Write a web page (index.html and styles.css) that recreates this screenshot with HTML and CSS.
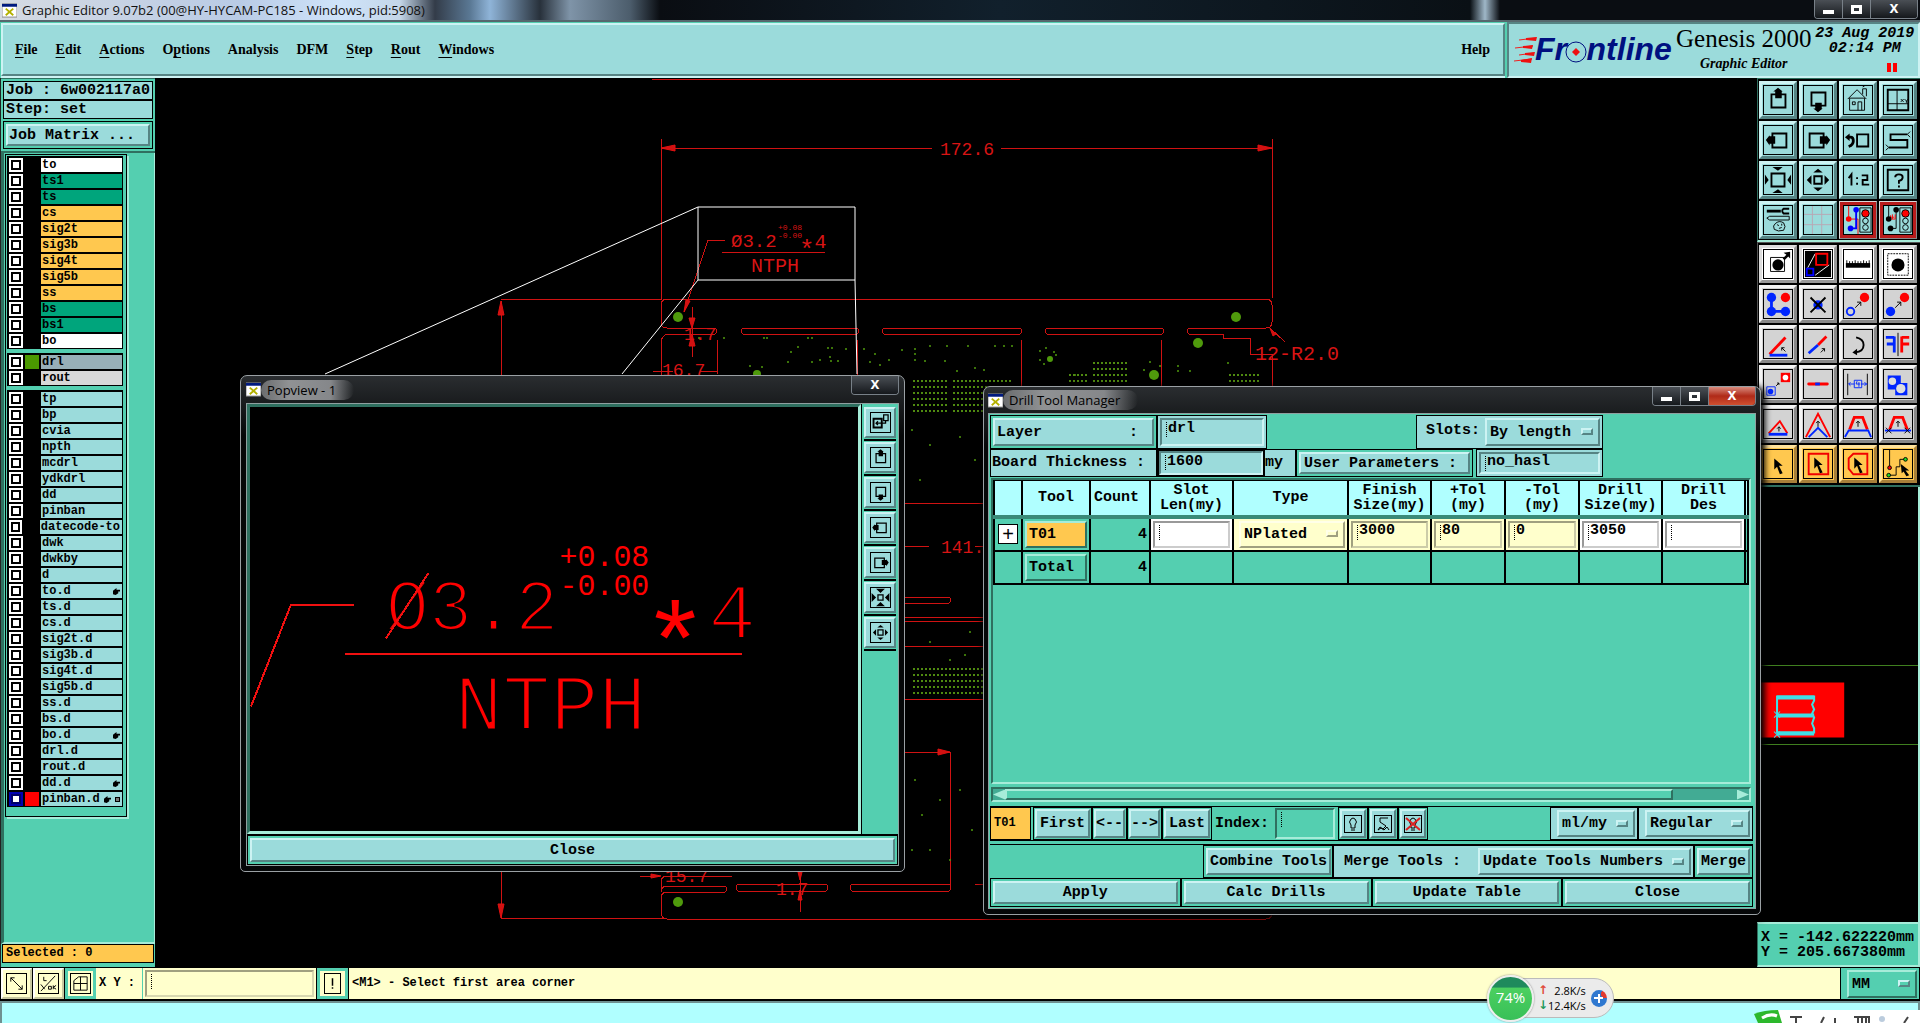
FILE: index.html
```html
<!DOCTYPE html>
<html lang="en">
<head>
    <meta charset="UTF-8">
    <title>Graphic Editor 9.07b2</title>
    <link rel="stylesheet" href="styles.css">
</head>
<body>
<svg class="defs" aria-hidden="true">
    <symbol id="i-up" viewBox="0 0 30 30"><path d="M8 9h15v14H8z" fill="none" stroke="#000" stroke-width="2"/><path d="M15 2l5 4h-1v7h-7V6h-2z"/></symbol>
    <symbol id="i-down" viewBox="0 0 30 30"><path d="M8 7h15v14H8z" fill="none" stroke="#000" stroke-width="2"/><path d="M15 28l5-4h-1v-6h-7v6h-2z"/></symbol>
    <symbol id="i-left" viewBox="0 0 30 30"><path d="M9 8h15v15H9z" fill="none" stroke="#000" stroke-width="2"/><path d="M2 15l4-5v1h6v8H6v2z"/></symbol>
    <symbol id="i-right" viewBox="0 0 30 30"><path d="M6 8h15v15H6z" fill="none" stroke="#000" stroke-width="2"/><path d="M28 15l-4-5v1h-7v8h7v2z"/></symbol>
    <symbol id="i-home" viewBox="0 0 30 30"><path d="M4 14L14 4l10 10M6 13v13h16V13M20 9V3h4v8M20 1l2-1M15 26v-9h4v9M9 17h3v3H9zM6 13h16" fill="none" stroke="#000"/></symbol>
    <symbol id="i-xy" viewBox="0 0 30 30"><path d="M4 4h22v22H4z" fill="none" stroke="#000" stroke-width="2"/><path d="M14 4v22M4 19h22M18 14l3 3M21 14l-3 3M22 14l2 2 2-2M24 16v2" fill="none" stroke="#000"/></symbol>
    <symbol id="i-back" viewBox="0 0 30 30"><path d="M14 9h12v13H14z" fill="none" stroke="#000" stroke-width="2"/><path d="M4 12h3q3 0 3 4t-5 6" fill="none" stroke="#000" stroke-width="3"/><path d="M1 12l5-4v8z"/></symbol>
    <symbol id="i-snake" viewBox="0 0 30 30"><path d="M25 9H7v6h18v8H5" fill="none" stroke="#000" stroke-width="2"/><path d="M28 6l-3 3 3 3M2 20l3 3-3 3" fill="none" stroke="#000"/></symbol>
    <symbol id="i-in" viewBox="0 0 30 30"><path d="M8 8h14v14H8z" fill="none" stroke="#000" stroke-width="2"/><path d="M9 1h11l-5 4zM9 29h11l-5-4zM1 9v11l4-5zM29 9v11l-4-5z"/></symbol>
    <symbol id="i-out" viewBox="0 0 30 30"><path d="M11 11h8v8h-8z" fill="none" stroke="#000" stroke-width="2"/><path d="M10 7h10l-5-4zM10 23h10l-5 4zM8 10v10l-5-5zM22 10v10l5-5z"/></symbol>
    <symbol id="i-in2" viewBox="0 0 30 30"><path d="M11 11h8v8h-8z" fill="none" stroke="#000" stroke-width="2"/><path d="M8 1h14l-7 7zM8 29h14l-7-7zM1 8v14l7-7zM29 8v14l-7-7z"/></symbol>
    <symbol id="i-ratio" viewBox="0 0 30 30"><path d="M5 13l3-4v12M14 12v2M14 18v2M19 10h6v5h-5v5h7" fill="none" stroke="#000" stroke-width="2"/></symbol>
    <symbol id="i-help" viewBox="0 0 30 30"><path d="M4 4h22v22H4z" fill="none" stroke="#000" stroke-width="2"/><path d="M12 12q0-3 4-3t4 3-4 4v3M16 21v2" fill="none" stroke="#000" stroke-width="2"/></symbol>
    <symbol id="i-tools" viewBox="0 0 30 30"><path d="M3 13l3-2h21v4H6z" stroke="#000" fill="none"/><path d="M3 4h15v3H3z"/><path d="M27 3h-6q-3 2 0 5h6" fill="none" stroke="#000" stroke-width="2"/><path d="M12 19q4-4 9-1 3 4 0 8-6 2-10-1-2-4 1-6zM14 20l2 1M19 19v2M16 24l3-1" fill="none" stroke="#000"/></symbol>
    <symbol id="i-grid" viewBox="0 0 30 30"><path d="M9 0v30M19 0v30M0 9h30M0 20h30" stroke="#b9a7b4" fill="none"/></symbol>
    <symbol id="i-net1" viewBox="0 0 30 30"><path d="M5 0v14h10v16" fill="none" stroke="red"/><path d="M13 5v19H8" fill="none" stroke="#00f" stroke-width="2"/><circle cx="5" cy="14" r="3" fill="red"/><circle cx="13" cy="4" r="3" fill="#00f"/><circle cx="7" cy="24" r="3" fill="#00f"/><path d="M17 2h12v26H17z" fill="none" stroke="#000"/><circle cx="23" cy="8" r="4" fill="red" stroke="#000"/><circle cx="23" cy="16" r="3" fill="none" stroke="#000"/><circle cx="23" cy="23" r="3" fill="none" stroke="#000"/></symbol>
    <symbol id="i-net2" viewBox="0 0 30 30"><path d="M5 0v14M13 5v19H8" fill="none" stroke="#000"/><path d="M7 10v4h5V9M9 9v5M7 12h4" fill="none" stroke="red"/><circle cx="5" cy="14" r="3"/><circle cx="13" cy="4" r="3"/><circle cx="7" cy="24" r="3"/><path d="M17 2h12v26H17z" fill="none" stroke="#000"/><circle cx="23" cy="8" r="4" fill="red" stroke="#000"/><circle cx="23" cy="16" r="3" fill="none" stroke="#000"/><circle cx="23" cy="23" r="3" fill="none" stroke="#000"/></symbol>
    <symbol id="i-feat" viewBox="0 0 30 30"><path d="M7 8h15v15H7z" fill="none" stroke="#000"/><circle cx="15" cy="16" r="6"/><path d="M20 9l4-4-3-2 7-1v7l-2-2-4 4z"/></symbol>
    <symbol id="i-pop" viewBox="0 0 30 30"><path d="M1 1h28v28H1z"/><path d="M12 4L4 19M27 16L12 27" stroke="#fff"/><path d="M13 4h12v12H13z" fill="none" stroke="red" stroke-width="2"/><path d="M3 20h7v7H3z" fill="none" stroke="#00f" stroke-width="2"/></symbol>
    <symbol id="i-ruler" viewBox="0 0 30 30"><path d="M2 14h26v5H2z"/><path d="M3 11v4M6 12v4M9 12v4M12 11v4M15 12v4M18 12v4M21 11v4M24 12v4M27 11v4" stroke="#000"/></symbol>
    <symbol id="i-pad" viewBox="0 0 30 30"><path d="M4 4h22v23H4z" fill="none" stroke="#000" stroke-dasharray="2 1"/><circle cx="15" cy="16" r="7"/></symbol>
    <symbol id="i-dots" viewBox="0 0 30 30"><path d="M8 8v15h15" fill="none" stroke="#0026ff" stroke-width="3"/><circle cx="8" cy="8" r="5" fill="#0026ff"/><circle cx="8" cy="23" r="5" fill="#0026ff"/><circle cx="23" cy="23" r="5" fill="#0026ff"/><circle cx="23" cy="8" r="5" fill="red"/></symbol>
    <symbol id="i-del" viewBox="0 0 30 30"><circle cx="15" cy="16" r="5" fill="#0026ff"/><path d="M7 8l16 16M23 8L7 24" stroke="#000" stroke-width="2"/></symbol>
    <symbol id="i-copy" viewBox="0 0 30 30"><circle cx="7" cy="23" r="4" fill="none" stroke="#0026ff" stroke-width="2"/><circle cx="22" cy="8" r="5" fill="red"/><path d="M12 19l6-6M14 13h4v4" fill="none" stroke="#000"/></symbol>
    <symbol id="i-move" viewBox="0 0 30 30"><circle cx="7" cy="23" r="5" fill="#0026ff"/><circle cx="22" cy="8" r="5" fill="red"/><path d="M12 19l6-6M14 13h4v4" fill="none" stroke="#000"/></symbol>
    <symbol id="i-rot" viewBox="0 0 30 30"><path d="M6 26L23 8" stroke="red" stroke-width="3"/><path d="M6 27h19" stroke="#0026ff" stroke-width="3"/><path d="M23 23l-4-4M19 22v-3h3" fill="none" stroke="#000"/></symbol>
    <symbol id="i-stretch" viewBox="0 0 30 30"><path d="M15 16l9-9" stroke="red" stroke-width="3"/><path d="M5 25l10-9" stroke="#0026ff" stroke-width="3"/><path d="M18 24l4-4M19 20h3v3" fill="none" stroke="#000"/></symbol>
    <symbol id="i-turn" viewBox="0 0 30 30"><path d="M13 8q8 2 8 8 0 7-9 8" fill="none" stroke="#000" stroke-width="2"/><path d="M9 24l5-4v7z"/></symbol>
    <symbol id="i-mirror" viewBox="0 0 30 30"><path d="M2 8h9M3 15h8M11 7v17" fill="none" stroke="#0026ff" stroke-width="3"/><path d="M27 8h-8M27 15h-7M19 7v17" fill="none" stroke="red" stroke-width="3"/><path d="M15 3v25" stroke="#000"/></symbol>
    <symbol id="i-chg" viewBox="0 0 30 30"><path d="M18 3h10v10H18z" fill="red"/><circle cx="23" cy="8" r="3" fill="#fff"/><path d="M3 18h9v9H3z" fill="none" stroke="#0026ff"/><circle cx="7" cy="23" r="3" fill="#0026ff"/><path d="M13 17l3-3M14 14h2v2" fill="none" stroke="#000"/></symbol>
    <symbol id="i-line" viewBox="0 0 30 30"><path d="M5 15h20" stroke="red" stroke-width="3" stroke-linecap="round"/><path d="M12 15h5" stroke="#0026ff" stroke-width="3"/></symbol>
    <symbol id="i-gap" viewBox="0 0 30 30"><path d="M4 4v23M25 4v23" stroke="#000"/><path d="M5 15h6M18 15h7M5 15l2-2M5 15l2 2M24 15l-2-2M24 15l-2 2M11 11h8v8h-8zM14 12l-1 3h4M16 13v5" fill="none" stroke="#0026ff"/></symbol>
    <symbol id="i-sub" viewBox="0 0 30 30"><path d="M4 6h14v8h7v13H12v-6H4z" fill="#0026ff"/><circle cx="9" cy="12" r="4" fill="#ddd"/><circle cx="18" cy="20" r="5" fill="#ddd"/></symbol>
    <symbol id="i-t1" viewBox="0 0 30 30"><path d="M5 25l12-13 8 13" fill="none" stroke="red" stroke-width="2"/><path d="M5 26h20" stroke="#0026ff" stroke-width="3"/><path d="M16 23v-5M14 20l2-2 2 2" fill="none" stroke="#000"/></symbol>
    <symbol id="i-t2" viewBox="0 0 30 30"><path d="M2 29L15 4l13 25" fill="none" stroke="red" stroke-width="2"/><path d="M5 29l10-10 10 10" fill="none" stroke="#0026ff" stroke-width="2"/><path d="M15 18v-6M13 14l2-2 2 2" fill="none" stroke="#000"/></symbol>
    <symbol id="i-t3" viewBox="0 0 30 30"><path d="M6 21L11 8h9l5 13" fill="none" stroke="red" stroke-width="3"/><path d="M1 29l4-7h21l3 7" fill="none" stroke="#0026ff" stroke-width="2"/><path d="M15 18v-6M13 14l2-2 2 2" fill="none" stroke="#000"/></symbol>
    <symbol id="i-t4" viewBox="0 0 30 30"><path d="M6 21L11 8h9l5 13" fill="none" stroke="red" stroke-width="3"/><path d="M1 22h28" fill="none" stroke="#0026ff" stroke-width="2"/><path d="M15 18v-6M13 14l2-2 2 2M2 19l6 6M8 19l-6 6M22 19l6 6M28 19l-6 6" fill="none" stroke="#000"/></symbol>
    <symbol id="i-arrow" viewBox="0 0 30 30"><path d="M11 9l9 8h-4l4 8-3 1-3-8-3 3z"/></symbol>
    <symbol id="i-asq" viewBox="0 0 30 30"><path d="M5 4h21v22H5z" fill="none" stroke="#f20000" stroke-width="2"/><path d="M11 8l9 8h-4l4 8-3 1-3-8-3 3z"/></symbol>
    <symbol id="i-aoct" viewBox="0 0 30 30"><path d="M10 4h15v22H10l-5-6V9z" fill="none" stroke="#f20000" stroke-width="2"/><path d="M11 8l9 8h-4l4 8-3 1-3-8-3 3z"/></symbol>
    <symbol id="i-anet" viewBox="0 0 30 30"><path d="M6 0v18M6 27h7v-9h4v-8h6" fill="none" stroke="#000"/><circle cx="6" cy="19" r="2" fill="red" stroke="#000"/><circle cx="5" cy="27" r="2" fill="#2d2" stroke="#000"/><circle cx="23" cy="10" r="2" fill="#2d2" stroke="#000"/><path d="M18 15l9 7h-4l4 5-3 1-3-5-2 2z"/></symbol>
    <symbol id="i-popwin" viewBox="0 0 30 30"><path d="M4 9h13v14H4z" fill="none" stroke="#000" stroke-width="3"/><path d="M20 3h7v9h-7zM8 16h15v-4M11 13l-3 3 3 3" fill="none" stroke="#000" stroke-width="2"/></symbol>
    <symbol id="i-x" viewBox="0 0 16 16"><path d="M0 1h16v14H0z" fill="#fff" stroke="#888"/><path d="M0 1h16v3H0z" fill="#001a80"/><path d="M4 6l8 7M12 6l-8 7" stroke="#b3b000" stroke-width="2"/></symbol>
    <symbol id="i-hand" viewBox="0 0 8 8"><path d="M0 3l4-3v2h4v2H6v2l-3 2-3-1z"/></symbol>
    <symbol id="i-diag" viewBox="0 0 20 20"><path d="M4 4l12 12M4 8V4h4M12 16h4v-4" fill="none" stroke="#000"/></symbol>
    <symbol id="i-angle" viewBox="0 0 20 20"><path d="M2 18L17 2M5 3v4h3M2 11l4 5M10 13h3v3h-3zM15 12v4M18 12l-3 2 3 2" fill="none" stroke="#000"/></symbol>
    <symbol id="i-snap" viewBox="0 0 20 20"><path d="M3 7l5-4h9v14H3zM10 3v14M3 10h14" fill="none" stroke="#000"/></symbol>
    <symbol id="i-bang" viewBox="0 0 20 20"><path d="M10 3v10M10 15v2" stroke="#000" stroke-width="2"/></symbol>
    <symbol id="i-bulb" viewBox="0 0 16 16"><path d="M6 12V9Q3 6 6 3q2-2 4 0 3 3 0 6v3zM6 14h4" fill="none" stroke="#000"/></symbol>
    <symbol id="i-hist" viewBox="0 0 16 16"><path d="M13 2H5v4l6 4-3 3-3-2-2 3M3 14l3-2 3 2 3-3 2 3" fill="none" stroke="#000"/></symbol>
    <symbol id="i-nobulb" viewBox="0 0 16 16"><path d="M6 12V9Q3 6 6 3q2-2 4 0 3 3 0 6v3zM6 14h4" fill="none" stroke="#000"/><path d="M1 2l14 12M15 2L1 14" stroke="#d22" stroke-width="2"/></symbol>
</svg>

<div class="app">
    <header class="titlebar">
        <svg class="app-icon"><use href="#i-x"/></svg>
        <h1>Graphic Editor 9.07b2 (00@HY-HYCAM-PC185 - Windows, pid:5908)</h1>
        <div class="win-btns">
            <button type="button" aria-label="Minimize"><i class="min"></i></button>
            <button type="button" aria-label="Restore"><i class="max"></i></button>
            <button type="button" class="wide" aria-label="Close">x</button>
        </div>
    </header>

    <div class="topbar">
        <nav class="menu">
            <a href="#"><u>F</u>ile</a>
            <a href="#"><u>E</u>dit</a>
            <a href="#"><u>A</u>ctions</a>
            <a href="#">O<u>p</u>tions</a>
            <a href="#">Analysis</a>
            <a href="#">DFM</a>
            <a href="#"><u>S</u>tep</a>
            <a href="#"><u>R</u>out</a>
            <a href="#"><u>W</u>indows</a>
            <a href="#" class="help">Help</a>
        </nav>
        <div class="brand">
            <svg class="logo" viewBox="0 0 162 50">
                <path d="M5 16l17-2M1 24l18-2M5 31l15-2M0 37l18-2" stroke="#e22" fill="none"/>
                <path d="M12 14l11-1-1 4-10-1zM9 22l10-1-1 4-9-1zM11 29l10-1-1 4-9-1zM7 36l11-2-1 5-10-1z" fill="#e11"/>
                <text x="21" y="36">Fr<tspan class="ghost">o</tspan>ntline</text>
                <circle cx="62" cy="28" r="10" fill="#9bdbdb" stroke="#001080"/>
                <path d="M62 24l4 4-4 4-4-4z" fill="#e11"/>
            </svg>
            <div class="product"><strong>Genesis 2000</strong><em>Graphic Editor</em></div>
            <div class="clock">23 Aug 2019<br>02:14 PM<i class="pause"></i></div>
        </div>
    </div>

    <main class="workspace">
        <aside class="left">
            <div class="info">
                <div class="cell">Job : 6w002117a0</div>
                <div class="cell">Step: set</div>
                <div class="slot"><button type="button" class="btn">Job Matrix ...</button></div>
            </div>
            <div class="layers"><div class="layer-box" id="layers"></div></div>
            <div class="selected"><div>Selected : 0</div></div>
        </aside>

        <section class="canvas">
            <svg viewBox="155 78 1602 889" preserveAspectRatio="xMinYMin slice">
                <defs>
                    <pattern id="dots" width="4" height="6" patternUnits="userSpaceOnUse"><path d="M1 2h2v2H1z" fill="#4f8a10"/></pattern>
                </defs>
                <g class="wire">
                    <path d="M652 79h368M661 139v161M1272 139v159M661 148h271M1001 148h271M501 299h160M501 301v617M501 918h162"/>
                    <path d="M661 305q0-6 6-6h599q6 0 6 6v17q0 6-6 6M661 305v17q0 6 6 6"/>
                    <path d="M667 328h48q4 3 0 6h-49q-5 4-5 8v500M743 328h114q4 3 0 6H743q-4-3 0-6zM884 328h136q4 3 0 6H884q-4-3 0-6zM1047 328h115q4 3 0 6h-115q-4-3 0-6zM1266 328h-77q-4 3 0 6h34v4h27v16h22v500M717 340v34M1021 340v540M1161 340v540M857 340v40"/>
                    <path d="M692 307v50M653 371h20M700 371h17M1270 328l15 14"/>
                    <path d="M905 503h78M905 617h78M905 621h78M905 597h44q4 3 0 6h-44M905 646h78M905 699h78M905 752h45v135M905 546h24M975 546h8"/>
                    <path d="M661 888v-6q0-6 6-6h65M640 876h20M700 876h30M661 892q0-6 6-6h58q4 3 0 6h-58M738 884h88q4 3 0 7h-88q-4-3 0-7zM852 884h97q4 3 0 7h-97q-4-3 0-7zM975 884h90M661 912v-14q0-6 6-6M661 912q0 7 6 7h599q6 0 6-7M800 872v40"/>
                    <path d="M684 312l24-72h17M722 252h103"/>
                </g>
                <g class="heads">
                    <path d="M661 148l14-3v6zM1272 148l-14-3v6zM501 301l-3 14h6zM501 918l-3-14h6zM692 328l-3-10h6zM692 334l-3 12h6zM1270 328l3 8 3-2zM950 752l-12-3v6zM684 312l2-12 4 1zM661 876l-10-2v4zM800 880l-2-8h4zM800 890l-2 10h4z"/>
                </g>
                <g class="cad">
                    <text x="940" y="155" font-size="18">172.6</text>
                    <text x="731" y="247" font-size="19">Ø3.2</text>
                    <text x="778" y="230" font-size="8">+0.08</text>
                    <text x="778" y="238" font-size="8">-0.00</text>
                    <text x="799" y="258" font-size="26">*<tspan font-size="20" dy="-10">4</tspan></text>
                    <text x="751" y="272" font-size="20">NTPH</text>
                    <text x="684" y="340" font-size="18">1.7</text>
                    <text x="1255" y="360" font-size="20">12-R2.0</text>
                    <text x="662" y="376" font-size="18">16.7</text>
                    <text x="941" y="553" font-size="18">141.</text>
                    <text x="665" y="882" font-size="18">15.7</text>
                    <text x="776" y="895" font-size="18">1.7</text>
                </g>
                <g id="drills" fill="#4f9a0c"></g>
                <g fill="url(#dots)">
                    <path d="M911 380h36v32h-36zM953 380h60v32h-60zM1092 362h36v24h-36zM1229 374h30v12h-30zM1068 374h20v10h-20z"/>
                    <path d="M911 668h72v30h-72z"/>
                </g>
                <path class="beam" d="M698 207h157v73H698zM698 207L325 374M698 280L622 374M855 280l2 94"/>
            </svg>
        </section>

        <aside class="right">
            <div class="tools tools-a">
                <button type="button" aria-label="Pan up"><svg><use href="#i-up"/></svg></button>
                <button type="button" aria-label="Pan down"><svg><use href="#i-down"/></svg></button>
                <button type="button" aria-label="Home"><svg><use href="#i-home"/></svg></button>
                <button type="button" aria-label="Zoom XY"><svg><use href="#i-xy"/></svg></button>
                <button type="button" aria-label="Pan left"><svg><use href="#i-left"/></svg></button>
                <button type="button" aria-label="Pan right"><svg><use href="#i-right"/></svg></button>
                <button type="button" aria-label="Previous view"><svg><use href="#i-back"/></svg></button>
                <button type="button" aria-label="Serpentine"><svg><use href="#i-snake"/></svg></button>
                <button type="button" aria-label="Zoom in"><svg><use href="#i-in"/></svg></button>
                <button type="button" aria-label="Zoom out"><svg><use href="#i-out"/></svg></button>
                <button type="button" aria-label="Scale"><svg><use href="#i-ratio"/></svg></button>
                <button type="button" aria-label="Query"><svg><use href="#i-help"/></svg></button>
                <button type="button" aria-label="Setup"><svg><use href="#i-tools"/></svg></button>
                <button type="button" aria-label="Grid"><svg><use href="#i-grid"/></svg></button>
                <button type="button" class="stop" aria-label="Net check"><svg><use href="#i-net1"/></svg></button>
                <button type="button" class="stop" aria-label="Spacing check"><svg><use href="#i-net2"/></svg></button>
            </div>
            <div class="tools tools-b">
                <button type="button" class="white" aria-label="Feature"><svg><use href="#i-feat"/></svg></button>
                <button type="button" class="white" aria-label="Popview"><svg><use href="#i-pop"/></svg></button>
                <button type="button" class="white" aria-label="Measure"><svg><use href="#i-ruler"/></svg></button>
                <button type="button" class="white" aria-label="Pad"><svg><use href="#i-pad"/></svg></button>
                <button type="button" aria-label="Add"><svg><use href="#i-dots"/></svg></button>
                <button type="button" aria-label="Delete"><svg><use href="#i-del"/></svg></button>
                <button type="button" aria-label="Copy"><svg><use href="#i-copy"/></svg></button>
                <button type="button" aria-label="Move"><svg><use href="#i-move"/></svg></button>
                <button type="button" aria-label="Rotate line"><svg><use href="#i-rot"/></svg></button>
                <button type="button" aria-label="Stretch"><svg><use href="#i-stretch"/></svg></button>
                <button type="button" aria-label="Turn"><svg><use href="#i-turn"/></svg></button>
                <button type="button" aria-label="Mirror"><svg><use href="#i-mirror"/></svg></button>
                <button type="button" aria-label="Change symbol"><svg><use href="#i-chg"/></svg></button>
                <button type="button" aria-label="Break line"><svg><use href="#i-line"/></svg></button>
                <button type="button" aria-label="Spacing"><svg><use href="#i-gap"/></svg></button>
                <button type="button" aria-label="Substitute"><svg><use href="#i-sub"/></svg></button>
                <button type="button" aria-label="Move corner"><svg><use href="#i-t1"/></svg></button>
                <button type="button" aria-label="Move two lines"><svg><use href="#i-t2"/></svg></button>
                <button type="button" aria-label="Move segment"><svg><use href="#i-t3"/></svg></button>
                <button type="button" aria-label="Slide segment"><svg><use href="#i-t4"/></svg></button>
                <button type="button" class="pick" aria-label="Select"><svg><use href="#i-arrow"/></svg></button>
                <button type="button" class="pick" aria-label="Select frame"><svg><use href="#i-asq"/></svg></button>
                <button type="button" class="pick" aria-label="Select polygon"><svg><use href="#i-aoct"/></svg></button>
                <button type="button" class="pick" aria-label="Select net"><svg><use href="#i-anet"/></svg></button>
            </div>
            <div class="overview">
                <svg viewBox="1757 487 161 434" preserveAspectRatio="xMinYMin slice">
                    <path d="M1757 682h87v55h-87z" fill="red"/>
                    <path d="M1757 665h163M1757 744h163" stroke="#3f7f1f"/>
                    <path d="M1777 696h37v4l-2 4 2 5-2 4 2 4-2 6 2 5v4h-37z" fill="none" stroke="#3fe0e6" stroke-width="2"/>
                    <path d="M1777 697h37M1777 715h37M1777 733h37" stroke="#3fe0e6" stroke-width="4"/>
                    <path d="M1774 711l6 6M1780 711l-6 6M1774 731l6 6M1780 731l-6 6" stroke="#3fe0e6"/>
                </svg>
            </div>
            <div class="coords">X = -142.622220mm<br>Y = 205.667380mm</div>
        </aside>
    </main>

    <footer class="status">
        <button type="button" class="sq" aria-label="Delta"><svg><use href="#i-diag"/></svg></button>
        <button type="button" class="sq" aria-label="Angle"><svg><use href="#i-angle"/></svg></button>
        <button type="button" class="sq on" aria-label="Snap"><svg><use href="#i-snap"/></svg></button>
        <label for="xy">X Y :</label>
        <span class="xy-cell"><input id="xy" class="field" type="text"></span>
        <button type="button" class="sq on bang" aria-label="Alert"><svg><use href="#i-bang"/></svg></button>
        <output>&lt;M1&gt; - Select first area corner</output>
        <span class="units"><span class="drop"><select aria-label="Units"><option>MM</option></select></span></span>
    </footer>
    <div class="desk"></div>

    <section class="window popview" aria-label="Popview - 1">
        <div class="caption">
            <svg class="app-icon"><use href="#i-x"/></svg><span>Popview - 1</span>
            <div class="win-btns"><button type="button" class="wide" aria-label="Close window">x</button></div>
        </div>
        <div class="frame">
            <div class="pop-main">
                <div class="pop-view">
                    <svg viewBox="249 407 609 425" preserveAspectRatio="xMinYMin slice">
                        <g class="cad big">
                            <text x="385" y="630" font-size="72">Ø3.2</text>
                            <text class="mid" x="559" y="566" font-size="30">+0.08</text>
                            <text class="mid" x="559" y="595" font-size="30">-0.00</text>
                            <text x="642" y="679" font-size="110"><tspan class="star">*</tspan><tspan font-size="80" dy="-41">4</tspan></text>
                            <text x="454" y="731" font-size="80">NTPH</text>
                        </g>
                        <g class="wire bold"><path d="M250 707l40-102h63M344 654h398M385 639l43-66"/></g>
                    </svg>
                </div>
                <div class="pop-tools">
                    <button type="button" aria-label="Detach"><svg><use href="#i-popwin"/></svg></button>
                    <button type="button" aria-label="Up"><svg><use href="#i-up"/></svg></button>
                    <button type="button" aria-label="Down"><svg><use href="#i-down"/></svg></button>
                    <button type="button" aria-label="Left"><svg><use href="#i-left"/></svg></button>
                    <button type="button" aria-label="Right"><svg><use href="#i-right"/></svg></button>
                    <button type="button" aria-label="In"><svg><use href="#i-in2"/></svg></button>
                    <button type="button" aria-label="Out"><svg><use href="#i-out"/></svg></button>
                </div>
            </div>
            <div class="slot pop-close"><button type="button" class="btn">Close</button></div>
        </div>
    </section>

    <section class="window drill" aria-label="Drill Tool Manager">
        <div class="caption">
            <svg class="app-icon"><use href="#i-x"/></svg><span>Drill Tool Manager</span>
            <div class="win-btns">
                <button type="button" aria-label="Minimize window"><i class="min"></i></button>
                <button type="button" aria-label="Maximize window"><i class="max"></i></button>
                <button type="button" class="wide red" aria-label="Close drill manager">x</button>
            </div>
        </div>
        <div class="frame">
            <div class="row row-layer">
                <span class="slot w-label"><button type="button" class="btn split"><span>Layer</span><span>:</span></button></span>
                <span class="well"><input class="field" type="text" aria-label="Layer" value="drl"></span>
                <span class="well slots"><label for="slots">Slots:</label><span class="drop"><select id="slots"><option>By length</option></select></span></span>
            </div>
            <div class="row row-board">
                <label class="well w-label" for="thick">Board Thickness :</label>
                <span class="well dark"><input id="thick" class="field" type="text" value="1600"></span>
                <span class="well my">my</span>
                <span class="slot user"><button type="button" class="btn">User Parameters :</button></span>
                <span class="well hasl"><input class="field" type="text" aria-label="User parameters" value="no_hasl"></span>
            </div>
            <div class="sheet">
                <table>
                    <colgroup><col class="c0"><col class="c1"><col class="c2"><col class="c3"><col class="c4"><col class="c3"><col class="c5"><col class="c5"><col class="c3"><col class="c3"><col></colgroup>
                    <thead>
                    <tr><th></th><th>Tool</th><th class="lft">Count</th><th>Slot<br>Len(my)</th><th>Type</th><th>Finish<br>Size(my)</th><th>+Tol<br>(my)</th><th>-Tol<br>(my)</th><th>Drill<br>Size(my)</th><th>Drill<br>Des</th><th></th></tr>
                    </thead>
                    <tbody>
                    <tr>
                        <td><button type="button" class="plus" aria-label="Expand">+</button></td>
                        <td><button type="button" class="tool orange">T01</button></td>
                        <td class="num">4</td>
                        <td class="wht"><input class="field" type="text" aria-label="Slot length"></td>
                        <td class="ylw"><span class="drop"><select aria-label="Type"><option>NPlated</option></select></span></td>
                        <td class="ylw"><input class="field" type="text" aria-label="Finish size" value="3000"></td>
                        <td class="ylw"><input class="field" type="text" aria-label="Plus tolerance" value="80"></td>
                        <td class="ylw"><input class="field" type="text" aria-label="Minus tolerance" value="0"></td>
                        <td class="wht"><input class="field" type="text" aria-label="Drill size" value="3050"></td>
                        <td class="wht"><input class="field" type="text" aria-label="Drill designator"></td>
                        <td></td>
                    </tr>
                    <tr><td></td><td><button type="button" class="tool">Total</button></td><td class="num">4</td><td></td><td></td><td></td><td></td><td></td><td></td><td></td><td></td></tr>
                    </tbody>
                </table>
            </div>
            <div class="scroll"><i class="arr-l"></i><div class="thumb"></div><i class="arr-r"></i></div>
            <div class="row row-nav">
                <span class="cur">T01</span>
                <span class="slot"><button type="button" class="btn">First</button></span>
                <span class="slot"><button type="button" class="btn step">&lt;--</button></span>
                <span class="slot"><button type="button" class="btn step">--&gt;</button></span>
                <span class="slot"><button type="button" class="btn">Last</button></span>
                <label for="idx">Index:</label><input id="idx" class="field" type="text">
                <span class="slot"><button type="button" class="btn ic" aria-label="Show"><svg><use href="#i-bulb"/></svg></button></span>
                <span class="slot"><button type="button" class="btn ic" aria-label="Histogram"><svg><use href="#i-hist"/></svg></button></span>
                <span class="slot"><button type="button" class="btn ic" aria-label="Hide"><svg><use href="#i-nobulb"/></svg></button></span>
                <span class="well unit"><span class="drop"><select aria-label="Tool units"><option>ml/my</option></select></span></span>
                <span class="well reg"><span class="drop"><select aria-label="Mode"><option>Regular</option></select></span></span>
            </div>
            <div class="row row-merge">
                <span class="slot comb"><button type="button" class="btn">Combine Tools</button></span>
                <span class="well mrg"><label for="merge">Merge Tools :</label><span class="drop"><select id="merge"><option>Update Tools Numbers</option></select></span></span>
                <span class="slot"><button type="button" class="btn">Merge</button></span>
            </div>
            <div class="row row-act">
                <span class="slot"><button type="button" class="btn">Apply</button></span>
                <span class="slot"><button type="button" class="btn">Calc Drills</button></span>
                <span class="slot"><button type="button" class="btn">Update Table</button></span>
                <span class="slot"><button type="button" class="btn">Close</button></span>
            </div>
        </div>
    </section>

    <div class="netspeed">
        <div class="ball">74%</div>
        <div class="speeds"><span><b class="u">↑</b>2.8K/s</span><span><b class="d">↓</b>12.4K/s</span></div>
        <button type="button" aria-label="Boost"></button>
    </div>
    <div class="ime">
        <svg viewBox="0 0 166 13"><path d="M0 4q10-4 24-4l4 13H4z" fill="#2cb82c"/><path d="M8 8q8-5 15-2" stroke="#fff" stroke-width="3" fill="none"/><path d="M36 7h12M42 7v6M70 7l-3 6M81 8v5M100 7h15v6M104 8v5M108 8v5M112 8v5M154 7l-4 6" stroke="#444" stroke-width="2" fill="none"/><circle cx="128" cy="9" r="3" fill="#bcd"/></svg>
    </div>
</div>
<script src="script.js"></script>
</body>
</html>
```
FILE: styles.css
```css
*{
    box-sizing: border-box;
    margin: 0;
    padding: 0;
}
:root{
    --cyan: #9bdbdb;
    --green: #54cfb0;
    --ice: #b0ffff;
    --cream: #ffffcc;
    --gold: #ffc84f;
    --hi: #cdf3f3;
    --lo: #568484;
    --ghi: #a6ecd9;
    --glo: #2f7060;
}
html, body{
    height: 100%;
}
body{
    background: #000;
    color: #000;
    overflow: hidden;
    font: bold 15px/15px "Liberation Mono", monospace;
}
button, input, select{
    font: inherit;
    color: inherit;
    border-radius: 0;
}
.defs{
    position: absolute;
    width: 0;
    height: 0;
}
svg{
    display: block;
}
.app{
    position: relative;
    display: flex;
    flex-direction: column;
    height: 100vh;
    overflow: hidden;
}

/* title bar */
.titlebar{
    display: flex;
    align-items: center;
    height: 22px;
    padding-left: 2px;
    flex: none;
    background: linear-gradient(90deg, #d5dae2 0, #b9cbe6 240px, #cfe4fa 340px, #c4d6e8 400px, #333c49 435px, #5a7894 470px, #8fb4d8 490px, #28313b 540px, #7f94a8 570px, #4c5d6c 630px, #0a0d12 660px, #11202c 1000px, #0a1015 1470px, #9fb7c8 1485px, #0a0d12 1500px);
    border-bottom: 2px solid #56686e;
}
.app-icon{
    width: 15px;
    height: 15px;
    margin-right: 5px;
}
.titlebar h1{
    font: 13px/20px "Open Sans", sans-serif;
    color: #111;
}
.win-btns{
    display: flex;
    margin-left: auto;
    align-self: flex-start;
    margin-right: 2px;
    border: 1px solid #788088;
    border-top: 0;
    border-radius: 0 0 4px 4px;
    overflow: hidden;
}
.win-btns button{
    width: 28px;
    height: 18px;
    display: flex;
    align-items: center;
    justify-content: center;
    background: linear-gradient(#4a4f55, #15181c);
    border: 0;
    border-right: 1px solid #788088;
    color: #fff;
    font: bold 16px/14px "Liberation Sans", sans-serif;
}
.win-btns .wide{
    width: 46px;
    border-right: 0;
    padding-bottom: 3px;
}
.min{
    width: 11px;
    height: 4px;
    background: #fff;
    margin-top: 5px;
}
.max{
    width: 11px;
    height: 9px;
    border: 3px solid #fff;
}

/* menu and brand */
.topbar{
    display: flex;
    flex: none;
    height: 56px;
    background: var(--green);
}
.menu{
    flex: 1;
    display: flex;
    align-items: center;
    gap: 18px;
    padding: 0 13px 0 12px;
    background: var(--cyan);
    border: 2px solid var(--hi);
    border-right-color: var(--lo);
    border-bottom-color: var(--lo);
    box-shadow: 0 2px 0 var(--hi);
    margin: 1px 2px 2px 1px;
    font: bold 14px/18px "Liberation Serif", serif;
}
.menu a{
    color: #000;
    text-decoration: none;
}
.menu u{
    text-underline-offset: 3px;
}
.menu .help{
    margin-left: auto;
}
.brand{
    display: flex;
    width: 413px;
    background: var(--cyan);
    border: 2px solid var(--lo);
    border-right-color: var(--hi);
    border-bottom-color: var(--hi);
}
.logo{
    width: 162px;
    height: 50px;
    margin-left: 5px;
}
.logo text{
    font: italic bold 32px "Liberation Sans", sans-serif;
    fill: #001080;
}
.logo .ghost{
    fill: var(--cyan);
}
.product{
    text-align: center;
    padding-top: 2px;
}
.product strong, .product em{
    display: block;
    white-space: nowrap;
}
.product strong{
    font: 25px/26px "Liberation Serif", serif;
}
.product em{
    font: italic bold 14px/24px "Liberation Serif", serif;
}
.clock{
    flex: 1;
    position: relative;
    text-align: center;
    font-style: italic;
    padding-top: 2px;
}
.pause{
    position: absolute;
    right: 21px;
    bottom: 4px;
    width: 10px;
    height: 9px;
    border: solid red;
    border-width: 0 4px;
}

/* workspace */
.workspace{
    flex: 1;
    min-height: 0;
    display: flex;
}
.left{
    width: 155px;
    display: flex;
    flex-direction: column;
    background: var(--green);
    border-left: 1px solid #222;
}
.info{
    padding: 2px 2px;
    border-top: 1px solid var(--glo);
    border-bottom: 2px solid var(--glo);
}
.cell{
    border: 1px solid #000;
    background: var(--cyan);
    height: 19px;
    padding: 1px 2px;
    white-space: nowrap;
}
.slot{
    display: flex;
    background: var(--green);
    border: 1px solid #000;
    padding: 2px;
}
.btn{
    flex: 1;
    background: var(--cyan);
    border: 2px solid var(--hi);
    border-right-color: var(--lo);
    border-bottom-color: var(--lo);
    text-align: center;
    white-space: nowrap;
}
.info .slot{
    height: 28px;
    margin-top: 2px;
}
.info .btn{
    text-align: left;
    padding-left: 1px;
}
.layers{
    flex: 1;
    min-height: 0;
    border-left: 3px solid var(--glo);
    border-right: 1px solid var(--ghi);
    border-bottom: 2px solid var(--ghi);
    padding: 1px 0 0 1px;
}
.layer-box{
    width: 122px;
    padding: 1px 3px 9px 1px;
    border: 1px solid #000;
    box-shadow: 2px 2px 0 var(--ghi);
}
.group{
    background: #000;
    padding: 1px 1px 0 2px;
    margin-bottom: 4px;
}
.group:last-child{
    margin-bottom: 0;
}
.layer{
    display: flex;
    height: 16px;
    padding: 1px 0;
    gap: 2px;
}
.layer input{
    appearance: none;
    width: 14px;
    height: 14px;
    background: #fff;
    box-shadow: inset 0 0 0 2px #fff, inset 0 0 0 4px #000;
}
.layer input:checked{
    box-shadow: inset 0 0 0 2px #0000b0, inset 0 0 0 4px #00006a;
}
.swatch{
    width: 14px;
}
.layer label{
    flex: 1;
    display: flex;
    align-items: center;
    gap: 4px;
    padding: 0 2px 0 1px;
    font-size: 12px;
    line-height: 14px;
    background: var(--cyan);
    white-space: nowrap;
}
.layer label.white{ background: #fff; }
.layer label.mask{ background: #00a57c; }
.layer label.sig{ background: var(--gold); }
.layer label.drl{ background: #98b0b8; }
.layer label.rout{ background: #d8d8d8; }
.layer svg{
    width: 7px;
    height: 7px;
    margin-left: auto;
}
.layer .tick{
    width: 5px;
    height: 5px;
    border: 1px solid #000;
    background: #777;
}
.swatch.g{ background: #4b9900; }
.swatch.r{ background: red; }
.selected{
    padding: 0 1px 4px;
}
.selected div{
    border: 1px solid #000;
    background: var(--gold);
    height: 19px;
    font-size: 12px;
    line-height: 16px;
    padding-left: 3px;
}
.canvas{
    flex: 1;
    min-width: 0;
    overflow: hidden;
}
.canvas svg, .overview svg, .pop-view svg{
    width: 100%;
    height: 100%;
}
.wire{
    fill: none;
    stroke: #d01212;
    shape-rendering: crispEdges;
}
.wire.bold{
    stroke: #f01010;
    stroke-width: 2;
}
.heads{
    fill: #d01212;
    stroke: #e01010;
}
.cad text{
    font-family: "Liberation Mono", monospace;
    font-weight: normal;
    fill: #d81414;
}
.cad.big text{
    fill: red;
    stroke: #000;
    stroke-width: 3px;
}
.cad.big .mid, .cad.big .star{
    stroke: none;
}
.beam{
    fill: none;
    stroke: #fff;
}

/* right tools */
.right{
    width: 163px;
    display: flex;
    flex-direction: column;
}
.tools{
    display: grid;
    grid-template-columns: repeat(4, 38px);
    grid-auto-rows: 38px;
    gap: 2px;
    padding: 2px 2px 2px 1px;
    background: #000;
    border-left: 1px solid var(--glo);
}
.tools-a{
    padding-bottom: 1px;
    border-top: 1px solid var(--glo);
    border-bottom: 2px solid var(--ghi);
}
.tools-b{
    border-top: 1px solid #555;
    border-left-color: #555;
    border-bottom: 2px solid var(--glo);
}
.tools button{
    padding: 1px;
    background: var(--cyan);
    border: 3px solid var(--hi);
    border-right-color: var(--lo);
    border-bottom-color: var(--lo);
}
.tools svg{
    width: 30px;
    height: 30px;
    border: 1px solid #000;
}
.tools .stop{
    padding: 3px;
    border: 1px solid #d8d8d8;
    border-right-color: #888;
    border-bottom-color: #888;
    box-shadow: inset 0 0 0 3px #b81c1c;
}
.tools-b button{
    background: #d3d3d3;
    border-color: #f4f4f4 #888 #888 #f4f4f4;
}
.tools-b .white{
    background: #fff;
    border-color: #ddd #999 #999 #ddd;
}
.tools-b .pick{
    background: var(--gold);
    border-color: #ffe29c #a8803a #a8803a #ffe29c;
}
.overview{
    flex: 1;
    min-height: 0;
    border-right: 2px solid var(--ghi);
}
.coords{
    height: 45px;
    padding: 6px 3px;
    background: var(--green);
    border: 2px solid var(--ghi);
    border-left: 1px solid var(--glo);
    white-space: nowrap;
}

/* status row */
.status{
    flex: none;
    display: flex;
    height: 34px;
    background: #000;
    border-bottom: 2px solid #000;
    padding: 1px 1px 0;
    font-size: 12px;
}
.sq{
    width: 31px;
    margin-right: 1px;
    display: flex;
    align-items: center;
    justify-content: center;
    background: var(--cream);
    border: 2px solid #fff;
    border-right-color: #c8c8a0;
    border-bottom-color: #c8c8a0;
}
.sq svg{
    width: 21px;
    height: 21px;
    border: 1px solid #000;
}
.sq.on{
    margin-right: 0;
    border-color: var(--green);
    border-width: 3px;
}
.sq.bang{
    margin: 0 1px;
}
.sq.bang svg{
    width: 17px;
}
.status label, .status output{
    background: var(--cream);
    line-height: 31px;
    white-space: pre;
}
.status label{
    width: 47px;
    padding-left: 3px;
    border-right: 1px solid var(--green);
}
.status output{
    flex: 1;
    padding-left: 3px;
}
.field{
    min-width: 0;
    border: 2px solid;
    border-color: #568484 #cdf3f3 #cdf3f3 #568484;
    background: repeating-linear-gradient(#000 0 1px, transparent 1px 2px) 4px 2px / 1px 15px no-repeat transparent;
    padding: 0 0 7px 6px;
    outline: 0;
}
.xy-cell{
    display: flex;
    width: 173px;
    padding: 2px;
    background: var(--cream);
}
.xy-cell .field{
    flex: 1;
    border-color: #a0a080 #d8d8b0 #d8d8b0 #a0a080;
}
.units{
    display: flex;
    width: 78px;
    margin-left: 1px;
    padding: 2px 2px 1px 6px;
    background: var(--green);
    font-size: 15px;
}
.units .drop{
    flex: 1;
    border-color: var(--ghi) var(--glo) var(--glo) var(--ghi);
    background: var(--green);
}
.desk{
    flex: none;
    height: 22px;
    background: var(--ice);
    border: 2px solid #6f9090;
    border-bottom: 0;
}

/* drop-downs carry a small raised bar on the right */
.drop{
    position: relative;
    display: flex;
    flex: 1;
    background: var(--cyan);
    border: 2px solid var(--hi);
    border-right-color: var(--lo);
    border-bottom-color: var(--lo);
}
.drop select{
    appearance: none;
    flex: 1;
    min-width: 0;
    background: transparent;
    border: 0;
    padding-left: 3px;
    outline: 0;
}
.drop::after{
    content: "";
    position: absolute;
    right: 5px;
    top: 50%;
    margin-top: -4px;
    width: 8px;
    height: 3px;
    border: 2px solid var(--hi);
    border-right-color: var(--lo);
    border-bottom-color: var(--lo);
    pointer-events: none;
}

/* floating windows */
.window{
    position: absolute;
    display: flex;
    flex-direction: column;
    padding: 0 5px 5px;
    border: 1px solid #9aa0a4;
    border-radius: 7px 7px 5px 5px;
    background: linear-gradient(#2a2d30, #050708 60px);
}
.caption{
    display: flex;
    align-items: center;
    flex: none;
    height: 27px;
    font: 13px/20px "Open Sans", sans-serif;
    color: #000;
}
.caption span{
    padding: 0 18px 0 6px;
    margin-left: -5px;
    border-radius: 10px;
    background: linear-gradient(90deg, #6a6c6e, #909294 30%, #85878a 75%, transparent);
}
.window .frame{
    flex: 1;
    min-height: 0;
    display: flex;
    flex-direction: column;
    border: 1px solid #8fa0a0;
    background: #000;
}
.popview{
    left: 240px;
    top: 375px;
    width: 665px;
    height: 497px;
}
.popview .win-btns{
    margin-right: 0;
}
.pop-main{
    flex: 1;
    min-height: 0;
    display: flex;
    gap: 1px;
}
.pop-view{
    flex: 1;
    min-width: 0;
    border: 3px solid var(--glo);
    border-right-color: var(--ghi);
    border-bottom-color: var(--ghi);
}
.pop-tools{
    width: 36px;
    background: var(--green);
}
.pop-tools button{
    display: flex;
    align-items: center;
    justify-content: center;
    width: 32px;
    height: 31px;
    margin: 3px 2px 4px;
    background: var(--cyan);
    border: 2px solid var(--hi);
    border-right-color: var(--lo);
    border-bottom-color: var(--lo);
    outline: 1px solid var(--green);
    box-shadow: 0 3px 0 #000;
}
.pop-tools svg{
    width: 21px;
    height: 21px;
    border: 1px solid #000;
}
.pop-close{
    height: 30px;
    margin-top: 1px;
}
.drill{
    left: 983px;
    top: 386px;
    width: 778px;
    height: 529px;
    padding: 0 4px 5px;
    box-shadow: 2px 2px 6px 2px #000;
}
.drill .caption{
    height: 26px;
}
.drill .caption .win-btns{
    margin-right: 0;
}
.drill .win-btns .red{
    background: linear-gradient(#d88a7c, #b02a18 50%, #d05030);
}
.drill .frame{
    background: var(--green);
    padding: 1px 2px 1px 1px;
}
.row{
    display: flex;
    flex: none;
}
.well{
    display: flex;
    background: var(--cyan);
    border: 1px solid #000;
    padding: 2px;
}
.row .field{
    flex: 1;
}
.w-label{
    width: 167px;
}
.row-layer{
    height: 34px;
}
.row-layer .well{
    width: 110px;
}
.split{
    display: flex;
    align-items: center;
    justify-content: space-between;
    padding: 0 14px 0 2px;
}
.row-layer .slots{
    width: 187px;
    margin-left: 149px;
}
.slots label{
    width: 66px;
    padding-left: 7px;
    line-height: 26px;
}
.row-board{
    height: 28px;
}
label.w-label{
    line-height: 22px;
    padding-left: 1px;
}
.row-board .dark{
    width: 108px;
    border-width: 2px;
    padding: 0;
}
.row-board .field{
    padding-bottom: 4px;
}
.row-board .btn{
    text-align: left;
    padding-left: 3px;
}
.my{
    width: 31px;
    padding-left: 0;
    line-height: 22px;
    border-left: 0;
}
.user{
    width: 177px;
}
.hasl{
    width: 127px;
    margin-left: 3px;
}
.sheet{
    flex: 1;
    min-height: 0;
    overflow: hidden;
    border: 2px solid var(--glo);
    border-right-color: var(--ghi);
    border-bottom-color: var(--ghi);
    margin: 1px 2px 0 1px;
}
table{
    table-layout: fixed;
    width: 100%;
    border-collapse: collapse;
}
.c0{ width: 28px; }
.c1{ width: 68px; }
.c2{ width: 60px; }
.c3{ width: 83px; }
.c4{ width: 115px; }
.c5{ width: 74px; }
th{
    height: 36px;
    background: var(--ice);
    border: 2px solid #000;
    border-top-width: 1px;
}
th.lft{
    text-align: left;
    padding-left: 3px;
}
thead tr{
    border-bottom: 4px solid #3a8a78;
}
td{
    height: 33px;
    border: 2px solid #000;
    padding: 2px;
}
td .field{
    display: block;
    width: 100%;
    height: 27px;
    border-color: #999 #ccc #ccc #999;
}
td .drop{
    height: 27px;
    margin-left: 3px;
    background: transparent;
    border-color: #ffffe8 #a0a080 #a0a080 #ffffe8;
}
td .drop::after{
    border-color: #ffffe8 #a0a080 #a0a080 #ffffe8;
}
.ylw{ background: var(--cream); }
.wht{ background: #fff; }
.ylw .field{
    border-color: #a0a080 #cccca8 #cccca8 #a0a080;
}
.num{
    text-align: right;
}
.plus{
    display: block;
    width: 20px;
    height: 20px;
    margin: 0 auto;
    background: #fff;
    border: 1px solid #000;
    font: 20px/16px "Liberation Sans", sans-serif;
}
.tool{
    display: block;
    width: 100%;
    height: 27px;
    text-align: left;
    padding-left: 2px;
    background: var(--green);
    border: 2px solid var(--ghi);
    border-right-color: var(--glo);
    border-bottom-color: var(--glo);
}
.orange{
    background: var(--gold);
}
.scroll{
    flex: none;
    display: flex;
    align-items: center;
    height: 15px;
    margin: 3px 2px 4px 1px;
    background: #42ab94;
    border: 2px solid var(--glo);
    border-right-color: var(--ghi);
    border-bottom-color: var(--ghi);
}
.thumb{
    width: 668px;
    height: 11px;
    background: var(--green);
    border: 2px solid var(--ghi);
    border-right-color: var(--glo);
    border-bottom-color: var(--glo);
}
.arr-l, .arr-r{
    width: 12px;
    height: 10px;
    background: var(--ghi);
    clip-path: polygon(0 50%, 100% 0, 100% 100%);
}
.arr-r{
    margin-left: auto;
    clip-path: polygon(0 0, 100% 50%, 0 100%);
}
.row-nav{
    height: 35px;
    border-top: 1px solid #000;
    border-bottom: 1px solid #000;
}
.cur{
    width: 41px;
    margin-right: 2px;
    padding-left: 3px;
    border: 1px solid #000;
    background: var(--gold);
    font-size: 12px;
    line-height: 31px;
}
.row-nav .slot{
    padding: 1px;
}
.row-nav .btn{
    padding: 0 3px;
}
.row-nav .step{
    padding: 0;
}
.row-nav label{
    line-height: 33px;
    padding: 0 6px 0 3px;
}
.row-nav > .field{
    flex: none;
    width: 60px;
    margin: 1px 3px 1px 0;
    border-color: var(--glo) var(--ghi) var(--ghi) var(--glo);
}
.row-nav .ic{
    padding: 0 2px;
}
.row-nav .ic + .ic{
    margin-left: 1px;
}
.ic svg{
    width: 18px;
    height: 18px;
    border: 1px solid #000;
}
.unit{
    width: 88px;
    margin-left: auto;
    padding-left: 6px;
}
.reg{
    width: 115px;
    padding-left: 6px;
}
.row-merge{
    height: 34px;
    margin-top: 3px;
    border-top: 1px solid #000;
    justify-content: flex-end;
}
.row-merge .btn{
    padding: 0 2px;
}
.comb{
    width: 130px;
}
.mrg{
    width: 361px;
}
.mrg label{
    width: 142px;
    padding-left: 8px;
    line-height: 27px;
}
.row-act{
    height: 29px;
}
.row-act .slot{
    flex: 1;
}

/* desktop widgets */
.netspeed{
    position: absolute;
    left: 1488px;
    bottom: 5px;
    display: flex;
    align-items: center;
    width: 126px;
    height: 40px;
    border-radius: 20px;
    background: #ebebeb;
    border: 1px solid #bbb;
}
.ball{
    flex: none;
    width: 47px;
    height: 47px;
    margin: 0 4px 0 -2px;
    border: 2px solid #eee;
    border-radius: 50%;
    background: linear-gradient(#1f8a5c 24%, #4cd060 25%, #38c058);
    box-shadow: 0 0 2px #777;
    color: #fff;
    font: 15px/40px "Open Sans", sans-serif;
    text-align: center;
}
.speeds{
    flex: 1;
    font: 11px/15px "Open Sans", sans-serif;
}
.speeds span{
    display: flex;
    justify-content: space-between;
}
.speeds b{
    font: bold 12px/15px "DejaVu Sans", sans-serif;
}
.u{ color: #e04a3a; }
.d{ color: #1f9a5c; }
.netspeed button{
    width: 17px;
    height: 17px;
    margin: 0 6px 0 5px;
    border: 0;
    border-radius: 50%;
    background:
        radial-gradient(circle at 14px 4px, #e03a30 4px, transparent 4px),
        linear-gradient(#fff, #fff) center / 9px 2px no-repeat,
        linear-gradient(#fff, #fff) center / 2px 9px no-repeat,
        #2f78d0;
}
.ime{
    position: absolute;
    right: 0;
    bottom: 0;
    width: 166px;
    background: linear-gradient(90deg, transparent 20px, #fff 20px);
}
```
FILE: script.js
```js
var groups = [
    [['to', 'white'], ['ts1', 'mask'], ['ts', 'mask'], ['cs', 'sig'], ['sig2t', 'sig'], ['sig3b', 'sig'], ['sig4t', 'sig'], ['sig5b', 'sig'], ['ss', 'sig'], ['bs', 'mask'], ['bs1', 'mask'], ['bo', 'white']],
    [['drl', 'drl', 'g'], ['rout', 'rout']],
    [['tp'], ['bp'], ['cvia'], ['npth'], ['mcdrl'], ['ydkdrl'], ['dd'], ['pinban'], ['datecode-to'], ['dwk'], ['dwkby'], ['d'], ['to.d', '', '', 1], ['ts.d'], ['cs.d'], ['sig2t.d'], ['sig3b.d'], ['sig4t.d'], ['sig5b.d'], ['ss.d'], ['bs.d'], ['bo.d', '', '', 1], ['drl.d'], ['rout.d'], ['dd.d', '', '', 1], ['pinban.d', '', 'r', 2]]
];
var html = '';
for (var i = 0; i < groups.length; i++) {
    html += '<div class="group">';
    for (var j = 0; j < groups[i].length; j++) {
        var l = groups[i][j];
        var id = 'layer-' + l[0];
        html += '<div class="layer"><input type="checkbox" id="' + id + '"' + (l[3] == 2 ? ' checked' : '') + '>' +
            '<span class="swatch ' + (l[2] || '') + '"></span>' +
            '<label for="' + id + '" class="' + (l[1] || '') + '">' + l[0] +
            (l[3] ? '<svg><use href="#i-hand"/></svg>' : '') +
            (l[3] == 2 ? '<i class="tick"></i>' : '') + '</label></div>';
    }
    html += '</div>';
}
document.getElementById('layers').innerHTML = html;

// drill hits: x, y, radius
var hits = [[678, 317, 5], [1236, 317, 5], [1198, 343, 5], [1154, 375, 5], [1050, 359, 3], [757, 374, 4], [678, 902, 5]];
var small = [[699, 338], [724, 338], [764, 338], [767, 338], [808, 338], [812, 338], [798, 347], [828, 348], [832, 348], [846, 349], [864, 349], [791, 352], [830, 357], [875, 354], [889, 360], [915, 349], [915, 354], [930, 346], [947, 346], [968, 346], [995, 346], [1004, 346], [1012, 346], [788, 362], [812, 362], [820, 360], [831, 361], [838, 361], [870, 362], [880, 365], [902, 350], [915, 360], [925, 361], [945, 361], [957, 371], [975, 368], [984, 370], [1040, 351], [1046, 348], [1054, 352], [1040, 360], [1044, 364], [1056, 355], [1075, 375], [1150, 362], [1160, 366], [1144, 370], [1178, 366], [1178, 371], [1190, 371], [1228, 363], [750, 366], [762, 367], [912, 430], [930, 445], [960, 437], [975, 460], [920, 480], [950, 660], [965, 655], [930, 642], [970, 632], [915, 780], [940, 800], [922, 815], [960, 790], [972, 830], [930, 850], [912, 850], [950, 860]];
var ns = 'http://www.w3.org/2000/svg';
var drills = document.getElementById('drills');
for (var k = 0; k < small.length; k++) {
    hits.push([small[k][0], small[k][1], 1]);
}
for (k = 0; k < hits.length; k++) {
    var c = document.createElementNS(ns, 'circle');
    c.setAttribute('cx', hits[k][0]);
    c.setAttribute('cy', hits[k][1]);
    c.setAttribute('r', hits[k][2]);
    drills.appendChild(c);
}
```
